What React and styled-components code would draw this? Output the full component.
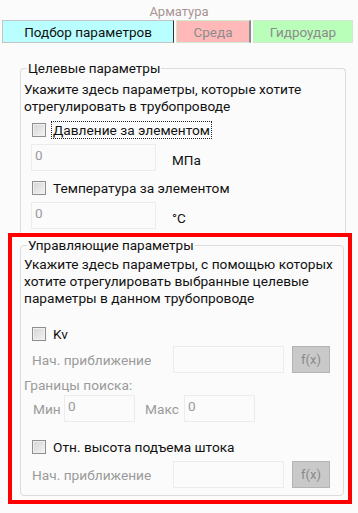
import React from 'react';
import styled, { createGlobalStyle } from 'styled-components';

const GlobalStyle = createGlobalStyle`
    * { box-sizing: border-box; }
    body {
        margin: 0;
        background-color: #fbfbfb;
        font-family: Roboto, "Noto Sans", sans-serif;
        font-size: 13px;
    }
`

export default function App() {
    return (
        <Page>
            <GlobalStyle />
            <Title>Арматура</Title>
            <Tabs>
                <Tab bg="#b9ffff" active width="172px">Подбор параметров</Tab>
                <Tab bg="#ffb9b9" width="75px">Среда</Tab>
                <Tab bg="#b9ffb9" width="100px">Гидроудар</Tab>
            </Tabs>

            <Group open>
                <Legend>Целевые параметры</Legend>
                <Hint top="5px">Укажите здесь параметры, которые хотите отрегулировать в трубопроводе</Hint>
                <CheckRow top="6px">
                    <Box />
                    <CheckLabel focused>Давление за элементом</CheckLabel>
                </CheckRow>
                <ValueRow>
                    <Field width="125px">0</Field>
                    <Unit>МПа</Unit>
                </ValueRow>
                <CheckRow top="8px">
                    <Box />
                    <CheckLabel>Температура за элементом</CheckLabel>
                </CheckRow>
                <ValueRow>
                    <Field width="125px">0</Field>
                    <Unit>°C</Unit>
                </ValueRow>
            </Group>

            <Highlight>
                <Group>
                    <Legend>Управляющие параметры</Legend>
                    <Hint top="3px">Укажите здесь параметры, с помощью которых хотите отрегулировать выбранные целевые параметры в данном трубопроводе</Hint>
                    <CheckRow top="18px">
                        <Box />
                        <CheckLabel>Kv</CheckLabel>
                    </CheckRow>
                    <ApproxRow top="4px" bottom="4px">
                        <Muted>Нач. приближение</Muted>
                        <Field width="111px" />
                        <FxButton>f(x)</FxButton>
                    </ApproxRow>
                    <Muted as="div">Границы поиска:</Muted>
                    <BoundsRow>
                        <Muted>Мин</Muted>
                        <Field width="71px">0</Field>
                        <Muted>Макс</Muted>
                        <Field width="71px">0</Field>
                    </BoundsRow>
                    <CheckRow top="16px">
                        <Box />
                        <CheckLabel>Отн. высота подъема штока</CheckLabel>
                    </CheckRow>
                    <ApproxRow top="6px" bottom="0">
                        <Muted>Нач. приближение</Muted>
                        <Field width="111px" />
                        <FxButton>f(x)</FxButton>
                    </ApproxRow>
                </Group>
            </Highlight>
        </Page>
    );
}

// ::::::::::Styled-Components::::::::::
const Page = styled.div`
    width: 358px;
    height: 513px;
    overflow: hidden;
    display: flex;
    flex-direction: column;
`
const Title = styled.div`
    height: 20px;
    padding-top: 3px;
    text-align: center;
    color: #a89494;
    font-size: 13px;
    line-height: 17px;
`
const Tabs = styled.div`
    display: flex;
    gap: 2px;
    padding-left: 2px;
`
const Tab = styled.div`
    width: ${p => p.width};
    height: 23px;
    background-color: ${p => p.bg};
    border: 1px solid ${p => p.active ? '#c4c4c4' : '#d0e8d0'};
    border-right: 1px solid ${p => p.active ? '#333' : '#d0e8d0'};
    color: ${p => p.active ? '#111' : '#8c8c8c'};
    font-size: 13.5px;
    display: flex;
    align-items: center;
    justify-content: center;

    &:nth-child(2) {
        border-right: 2px solid #8a8a8a;
    }
`
const Highlight = styled.div`
    margin: 0 6px 0 8px;
    border: 4px solid #ff0000;
    padding: 0 4px 4px 8px;
`
const Group = styled.fieldset`
    margin: ${p => p.open ? '17px 12px 0 20px' : '0'};
    padding: 0 0 ${p => p.open ? '4px' : '7px'} 3px;
    border: 1px solid #dcdcdc;
    border-radius: 4px;
    ${p => p.open && `
        border-bottom: none;
        border-bottom-left-radius: 0;
        border-bottom-right-radius: 0;
    `}
    min-width: 0;
`
const Legend = styled.legend`
    margin-left: 3px;
    padding: 0 1px;
    font-size: 13.5px;
    line-height: 16px;
    color: #111;
`
const Hint = styled.div`
    margin-top: ${p => p.top};
    padding-right: 6px;
    font-size: 13.7px;
    line-height: 17px;
    color: #111;
`
const CheckRow = styled.div`
    display: flex;
    align-items: center;
    gap: 6px;
    margin-top: ${p => p.top};
    padding-left: 8px;
    height: 17px;
`
const Box = styled.span`
    width: 14px;
    height: 14px;
    border: 1px solid #8f8f8f;
    background: linear-gradient(135deg, #d4d4d4, #f4f4f4);
    box-shadow: inset 0 0 0 1px #f0f0f0;
`
const CheckLabel = styled.span`
    font-size: 13.7px;
    color: #111;
    padding: 0 1px;
    outline: ${p => p.focused ? '1px dotted #222' : 'none'};
    outline-offset: 0;
`
const ValueRow = styled.div`
    display: flex;
    align-items: flex-end;
    gap: 16px;
    margin-top: 6px;
    padding-left: 7px;
`
const Field = styled.div`
    width: ${p => p.width};
    height: 27px;
    border: 1px solid #ececec;
    background-color: #fbfbfb;
    color: #9a9a9a;
    font-size: 13.5px;
    padding: 2px 3px;
`
const Unit = styled.span`
    color: #111;
    font-size: 13.5px;
    padding-bottom: 3px;
`
const Muted = styled.span`
    color: #9a9a9a;
    font-size: 13.7px;
`
const ApproxRow = styled.div`
    display: flex;
    align-items: center;
    margin-top: ${p => p.top};
    margin-bottom: ${p => p.bottom};
    padding-left: 8px;

    ${Muted} { width: 141px; }
    ${Field} { margin-right: 8px; }
`
const BoundsRow = styled.div`
    display: flex;
    align-items: center;
    margin-top: 2px;
    padding-left: 9px;

    ${Muted}:first-child { width: 31px; }
    ${Muted}:nth-child(3) { width: 39px; margin-left: 10px; }
`
const FxButton = styled.div`
    width: 38px;
    height: 27px;
    background-color: #c9c9c9;
    border: 1px solid #b4b4b4;
    color: #8a8a8a;
    font-size: 13px;
    display: flex;
    align-items: center;
    justify-content: center;
`
